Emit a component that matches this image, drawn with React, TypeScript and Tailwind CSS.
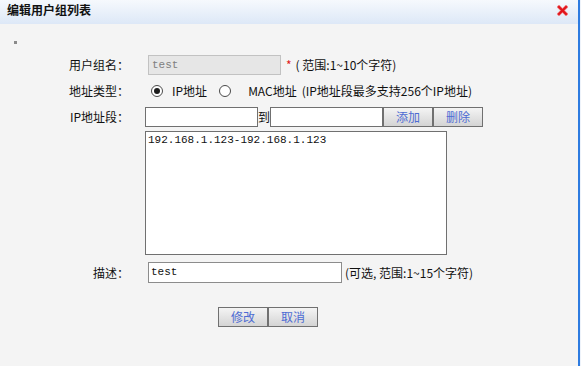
import React from 'react';

// ── Small pieces ──────────────────────────────────────────────────────

const FONT = "font-['Microsoft_YaHei','Noto_Sans_CJK_SC',sans-serif]";
const MONO = "font-['Liberation_Mono','Noto_Sans_CJK_SC',monospace]";

const Label: React.FC<{ children: React.ReactNode }> = ({ children }) => (
  <div className="w-[129px] shrink-0 text-right text-[12px] leading-[16px] text-[#111]">
    {children}
  </div>
);

const Radio: React.FC<{ checked?: boolean }> = ({ checked }) => (
  <span className="flex h-[12px] w-[12px] shrink-0 items-center justify-center rounded-full border border-[#4a4a4a] bg-white">
    {checked && <span className="h-[6px] w-[6px] rounded-full bg-[#1c1c1c]" />}
  </span>
);

const GrayButton: React.FC<{ children: React.ReactNode }> = ({ children }) => (
  <button className="flex h-[20px] w-[50px] shrink-0 items-center justify-center border border-[#707070] bg-gradient-to-b from-[#f4f4f4] to-[#d4d4d4] text-[12px] leading-none text-[#4d6bd3]">
    {children}
  </button>
);

const CloseIcon = () => (
  <svg width="11" height="11" viewBox="0 0 11 11" className="mt-[5px] shrink-0">
    <path d="M2 2 L9 9 M9 2 L2 9" stroke="#f08a8a" strokeWidth="3.4" strokeLinecap="square" />
    <path d="M2 2 L9 9 M9 2 L2 9" stroke="#e1141c" strokeWidth="2.2" strokeLinecap="square" />
  </svg>
);

// ── Page ──────────────────────────────────────────────────────────────

export default function App() {
  return (
    <div className={`flex h-[366px] w-[581px] bg-[#f4f4f4] ${FONT}`}>
      <div className="flex w-[578px] flex-col">
        {/* Title bar */}
        <div className="flex h-[24px] items-start justify-between bg-gradient-to-b from-[#f6f9fd] to-[#dde8f7] pl-[7px] pr-[10px]">
          <span className="text-[12px] font-bold leading-[19px] text-[#111]">编辑用户组列表</span>
          <CloseIcon />
        </div>

        {/* Body */}
        <div className="flex flex-col">
          <div className="ml-[14px] mt-[17px] h-[3px] w-[3px] bg-[#8a8a8a]" />

          {/* 用户组名 */}
          <div className="mt-[11px] flex h-[20px] items-center">
            <Label>用户组名：</Label>
            <div className={`ml-[19px] flex h-[20px] w-[133px] items-center border border-[#c2c2c2] bg-[#e6e6e6] px-[3px] text-[11px] text-[#808080] ${MONO}`}>
              test
            </div>
            <span className="ml-[5px] text-[12px] text-[#e02020]">*</span>
            <span className="ml-[4px] text-[12px] text-[#111]">( 范围:1~10个字符)</span>
          </div>

          {/* 地址类型 */}
          <div className="mt-[8px] flex h-[16px] items-center">
            <Label>地址类型：</Label>
            <div className="ml-[22px] flex items-center text-[12px] text-[#111]">
              <Radio checked />
              <span className="ml-[9px]">IP地址</span>
              <span className="ml-[12px]"><Radio /></span>
              <span className="ml-[17px]">MAC地址</span>
              <span className="ml-[5px]">(IP地址段最多支持256个IP地址)</span>
            </div>
          </div>

          {/* IP地址段 */}
          <div className="mt-[8px] flex h-[20px] items-center">
            <Label>IP地址段：</Label>
            <div className="ml-[16px] flex items-center">
              <div className="h-[20px] w-[113px] border border-[#707070] bg-white" />
              <span className="w-[12px] text-center text-[12px] text-[#111]">到</span>
              <div className="h-[20px] w-[113px] border border-[#707070] bg-white" />
              <GrayButton>添加</GrayButton>
              <GrayButton>删除</GrayButton>
            </div>
          </div>

          <textarea
            readOnly
            defaultValue="192.168.1.123-192.168.1.123"
            className={`ml-[145px] mt-[4px] h-[124px] w-[302px] resize-none border border-[#707070] bg-white px-[2px] pt-[1px] text-[11px] leading-[14px] text-[#111] outline-none ${MONO}`}
          />

          {/* 描述 */}
          <div className="mt-[7px] flex h-[21px] items-center">
            <Label>描述：</Label>
            <div className={`ml-[19px] flex h-[21px] w-[194px] items-center border border-[#8c8c8c] bg-white px-[2px] text-[11px] text-[#111] ${MONO}`}>
              test
            </div>
            <span className="ml-[3px] text-[12px] text-[#111]">(可选, 范围:1~15个字符)</span>
          </div>

          {/* Actions */}
          <div className="ml-[218px] mt-[24px] flex">
            <GrayButton>修改</GrayButton>
            <GrayButton>取消</GrayButton>
          </div>
        </div>
      </div>
      <div className="w-[2px] bg-[#2d7be0]" />
      <div className="w-[1px] bg-[#eef3fa]" />
    </div>
  );
}
